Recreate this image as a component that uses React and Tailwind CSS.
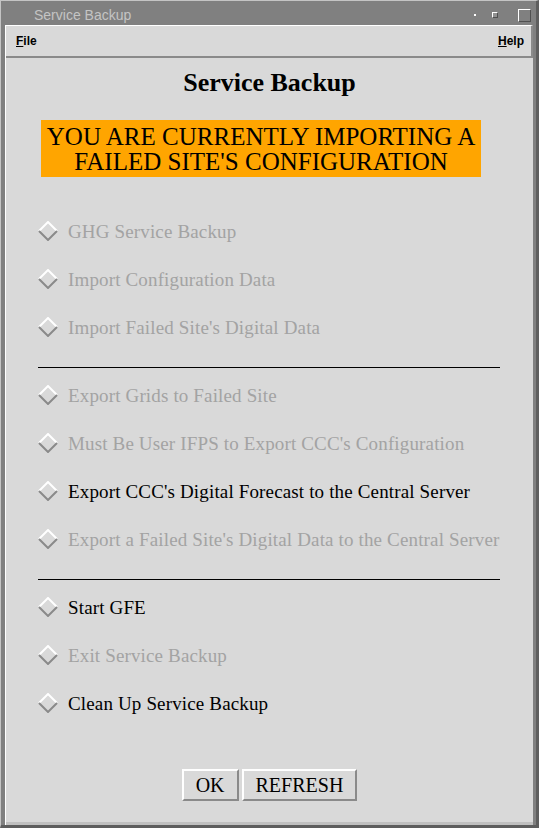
import React from 'react';

// ─── Radio diamond (Motif style) ─────────────────────────────────────────────

function Diamond() {
  return (
    <svg width="20" height="20" viewBox="0 0 20 20" className="shrink-0">
      <polyline points="1,10 10,1 19,10" fill="none" stroke="#ffffff" strokeWidth="2" />
      <polyline points="1,10 10,19 19,10" fill="none" stroke="#8a8a8a" strokeWidth="2" />
    </svg>
  );
}

function Option({ label, enabled }) {
  return (
    <div className="flex items-center h-[48px] pl-[32px]">
      <Diamond />
      <span
        className={
          'ml-[10px] text-[19px] leading-none tracking-[0.15px] whitespace-nowrap ' +
          (enabled ? 'text-black' : 'text-[#a3a3a3]')
        }
      >
        {label}
      </span>
    </div>
  );
}

function Separator() {
  return (
    <div className="h-[20px] pt-[16px] pl-[32px] pr-[33px]">
      <div className="h-px w-full bg-black" />
    </div>
  );
}

function Button({ children }) {
  return (
    <button className="h-[32px] px-[12px] bg-[#d9d9d9] border-t-2 border-l-2 border-white border-r-2 border-b-2 border-r-[#8a8a8a] border-b-[#8a8a8a] text-[20px] leading-none text-black">
      {children}
    </button>
  );
}

// ─── Page ───────────────────────────────────────────────────────────────────

export default function App() {
  const serif = { fontFamily: '"Liberation Serif", "Times New Roman", serif' };
  const sans = { fontFamily: '"Liberation Sans", Arial, sans-serif' };

  return (
    <div className="w-[539px] h-[828px] bg-[#808080] border-l border-t border-[#c4c4c4] border-r-[3px] border-b-[3px] border-r-[#5e5e5e] border-b-[#5e5e5e] flex flex-col">
      {/* Title bar */}
      <div className="h-[24px] flex items-center pl-[33px] pr-[5px] pt-[4px]" style={sans}>
        <span className="text-[14px] text-[#c4c4c4] leading-none">Service Backup</span>
        <div className="ml-auto flex items-center">
          <div className="w-[2px] h-[2px] bg-white mr-[16px]" />
          <div className="w-[6px] h-[6px] border border-t-white border-l-white border-r-[#505050] border-b-[#505050] bg-[#909090] mr-[20px]" />
          <div className="w-[13px] h-[13px] border border-t-white border-l-white border-r-[#505050] border-b-[#505050]" />
        </div>
      </div>

      <div className="flex-1 flex flex-col ml-[4px] mr-[3px] border-l border-white">
        {/* Menu bar */}
        <div className="h-[33px] bg-[#d9d9d9] border-t border-white border-b-2 border-b-[#8a8a8a] border-r-2 border-r-[#8a8a8a] flex items-center justify-between pl-[10px] pr-[7px]" style={sans}>
          <span className="text-[12px] font-bold text-black"><span className="underline">F</span>ile</span>
          <span className="text-[12px] font-bold text-black"><span className="underline">H</span>elp</span>
        </div>

        {/* Content */}
        <div className="flex-1 bg-[#d9d9d9] border-b-[3px] border-[#c0c0c0] flex flex-col" style={serif}>
          <div className="pt-[10px] text-center text-[26px] font-bold text-black leading-[30px]">
            Service Backup
          </div>

          <div className="mt-[22px] ml-[35px] w-[440px] h-[57px] bg-[#ffa500] flex flex-col items-center justify-center text-[25px] leading-[25px] text-black">
            <span>YOU ARE CURRENTLY IMPORTING A</span>
            <span>FAILED SITE'S CONFIGURATION</span>
          </div>

          <div className="mt-[30px] flex flex-col">
            <Option label="GHG Service Backup" />
            <Option label="Import Configuration Data" />
            <Option label="Import Failed Site's Digital Data" />
            <Separator />
            <Option label="Export Grids to Failed Site" />
            <Option label="Must Be User IFPS to Export CCC's Configuration" />
            <Option label="Export CCC's Digital Forecast to the Central Server" enabled />
            <Option label="Export a Failed Site's Digital Data to the Central Server" />
            <Separator />
            <Option label="Start GFE" enabled />
            <Option label="Exit Service Backup" />
            <Option label="Clean Up Service Backup" enabled />
          </div>

          <div className="mt-auto mb-[21px] flex justify-center gap-[3px]">
            <Button>OK</Button>
            <Button>REFRESH</Button>
          </div>
        </div>
      </div>
    </div>
  );
}
